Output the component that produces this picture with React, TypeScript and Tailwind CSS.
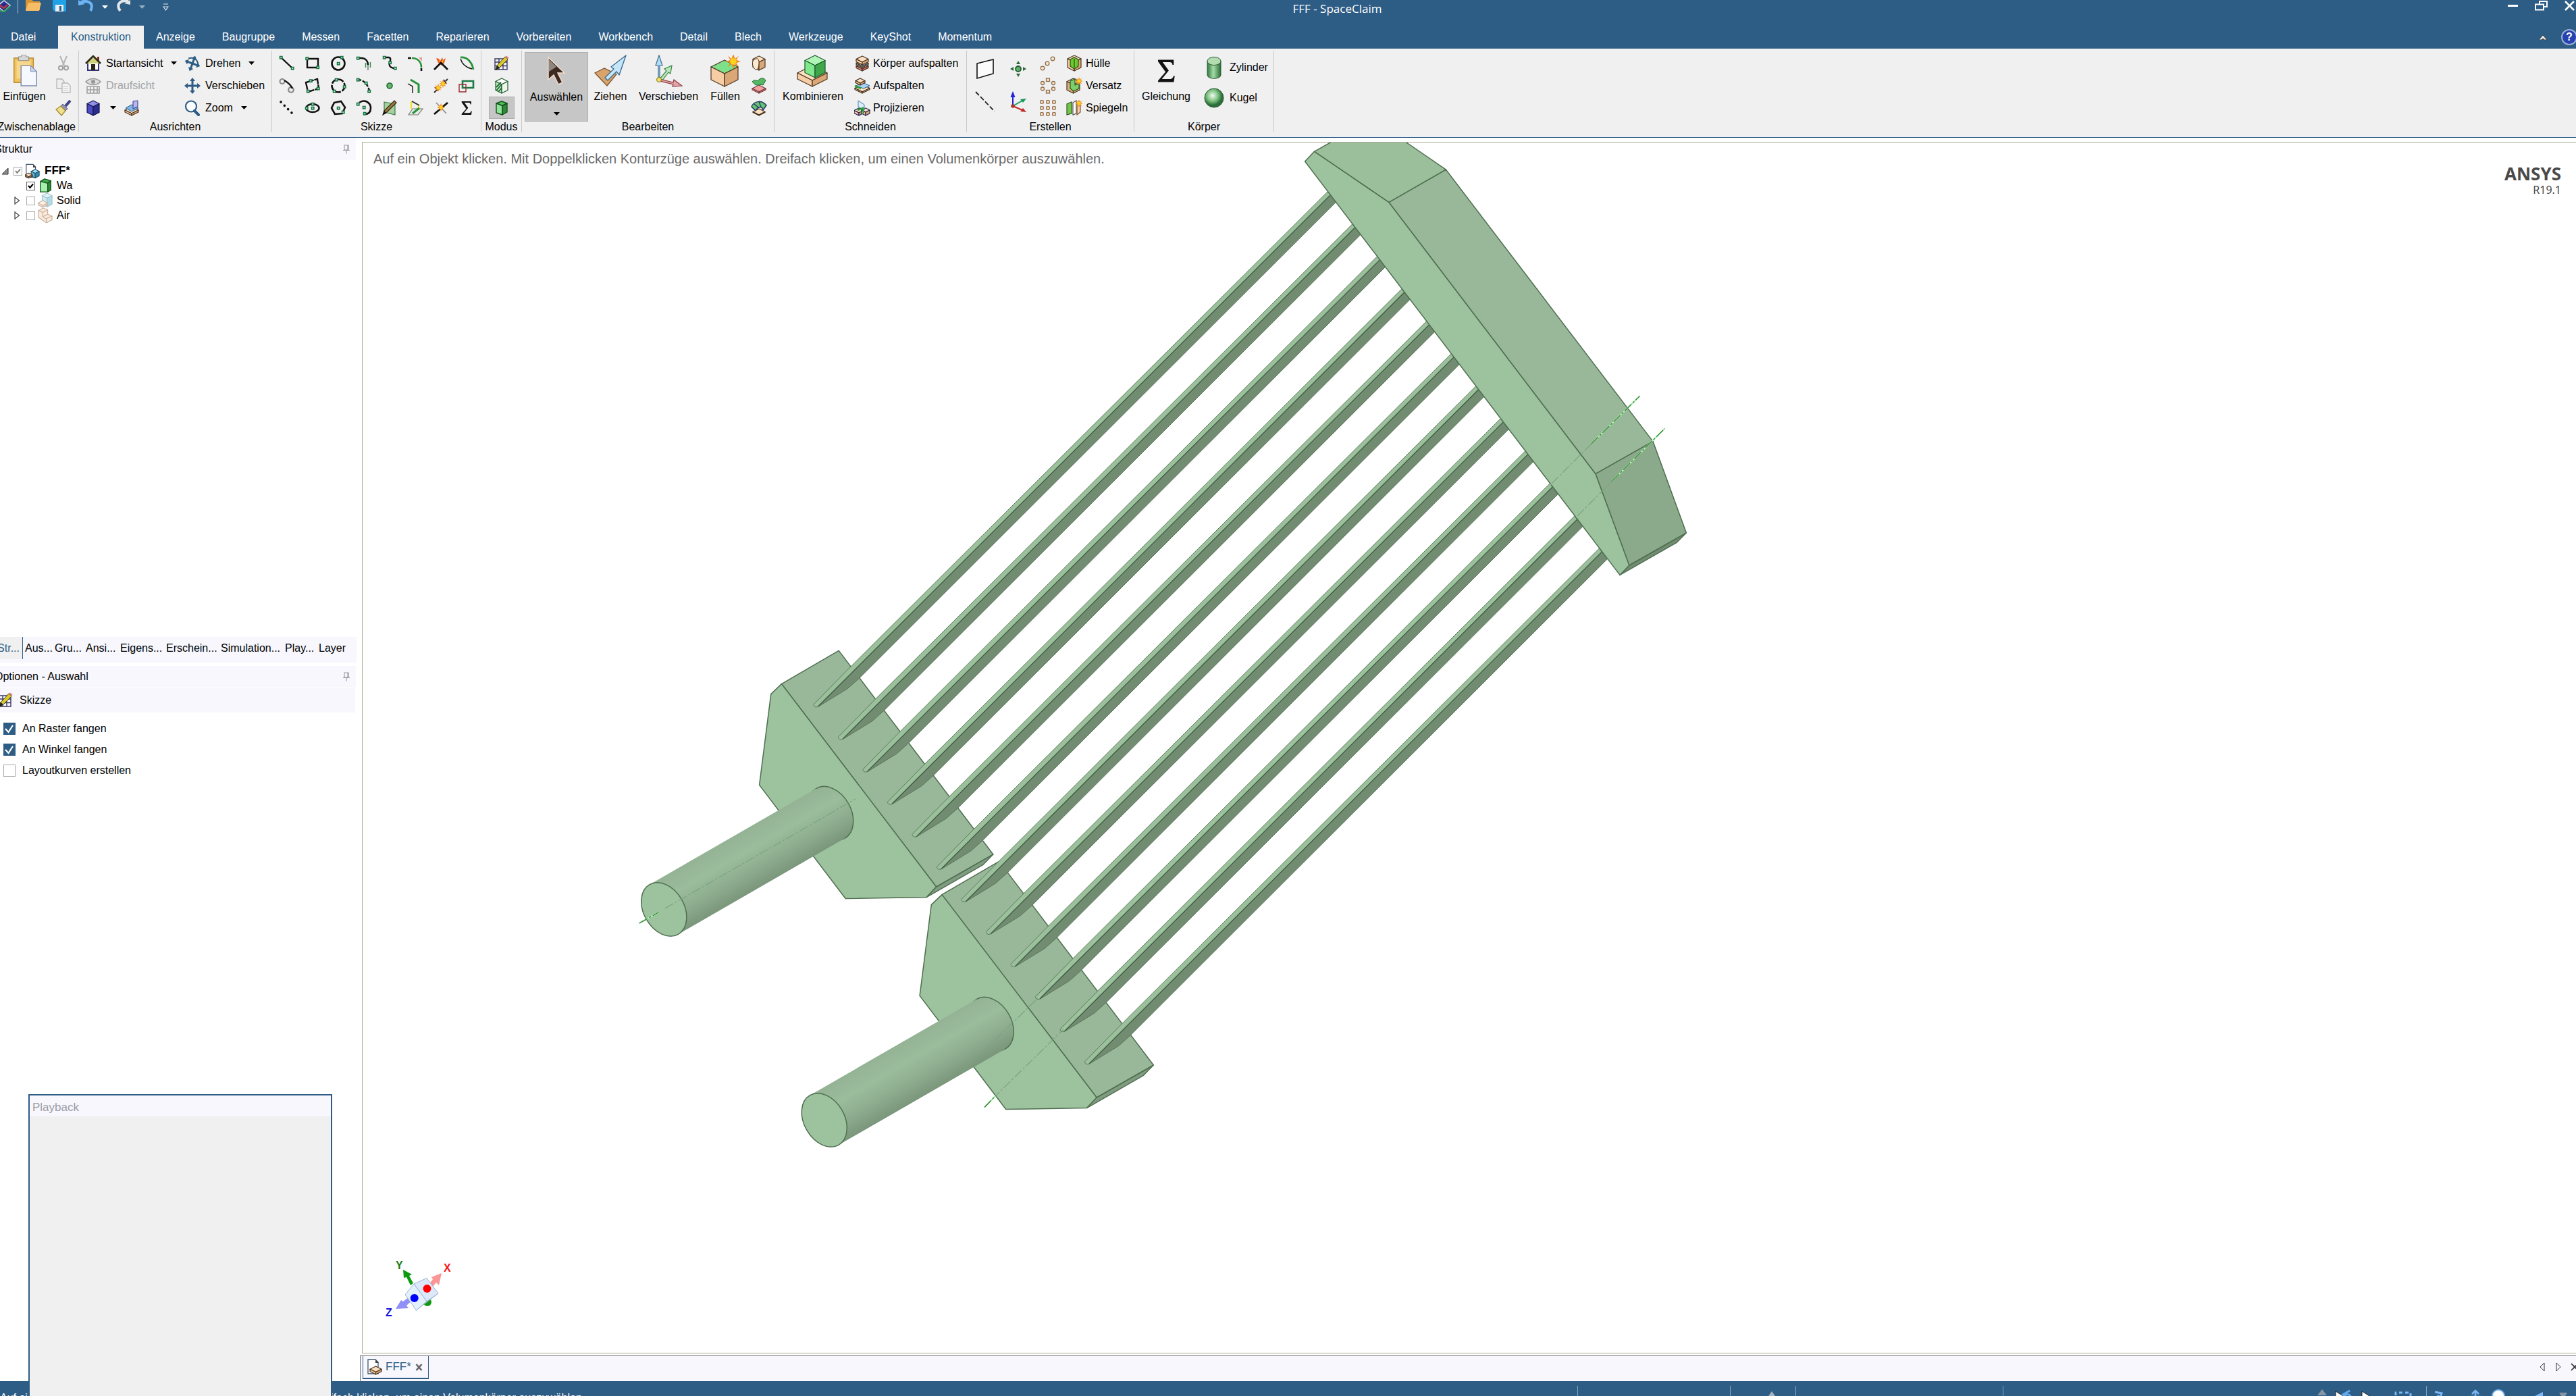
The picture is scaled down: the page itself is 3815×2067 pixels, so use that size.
import type { ReactNode } from "react";

type Kids = { children?: ReactNode };

function Ico({ w = 24, h = 24, vw = 24, vh = 24, children }: Kids & { w?: number; h?: number; vw?: number; vh?: number }) {
  return (
    <svg width={w} height={h} viewBox={`0 0 ${vw} ${vh}`} fill="none" aria-hidden="true" className="block shrink-0">
      {children}
    </svg>
  );
}

/* small green handle used by the sketch tools */
const Sq = ({ x, y }: { x: number; y: number }) => (
  <rect x={x - 1.5} y={y - 1.5} width="3.4" height="3.4" fill="#b9e3c8" stroke="#14713f" strokeWidth="1.5" />
);

const Star = ({ x, y, r = 6 }: { x: number; y: number; r?: number }) => (
  <g transform={`translate(${x} ${y}) scale(${r / 6})`}>
    <path d="M0-6 1.4-2.2 4.5-4.5 2.4-1.2 6 0 2.4 1.2 4.5 4.5 1.4 2.2 0 6-1.4 2.2-4.5 4.5-2.4 1.2-6 0-2.4-1.2-4.5-4.5-1.4-2.2Z" fill="#f08a1a" />
    <circle r="2.6" fill="#ffd21e" />
  </g>
);

/* an isometric box with three shaded faces */
function Box({ x = 3, y = 2, w = 18, h = 20, top = "#fde0c2", left = "#f6cda4", right = "#dba777", line = "#4a3420" }: {
  x?: number; y?: number; w?: number; h?: number; top?: string; left?: string; right?: string; line?: string;
}) {
  const d = w * 0.25;
  const m = x + w / 2;
  return (
    <g stroke={line} strokeWidth="1.2" strokeLinejoin="round">
      <path d={`M${x} ${y + d}L${m} ${y}L${x + w} ${y + d}L${m} ${y + 2 * d}Z`} fill={top} />
      <path d={`M${x} ${y + d}L${m} ${y + 2 * d}V${y + h}L${x} ${y + h - d}Z`} fill={left} />
      <path d={`M${x + w} ${y + d}L${m} ${y + 2 * d}V${y + h}L${x + w} ${y + h - d}Z`} fill={right} />
    </g>
  );
}

const GreenSolid = () => (
  <Ico>
    <g stroke="#14501c" strokeWidth="1.4" strokeLinejoin="round">
      <path d="M4 5 12 2l8 3-7 3.5Z" fill="#4fbf5a" />
      <path d="M4 5l9 3.5V22l-9-3Z" fill="#8fe39a" />
      <path d="M20 5l-7 3.5V22l7-4Z" fill="#2c8a38" />
    </g>
  </Ico>
);

const SketchPencil = () => (
  <Ico>
    <path d="M2 5h18v16H2ZM2 10h18M2 15.500h18M8 5v16M14 5v16" stroke="#3d3a66" strokeWidth="1.4" />
    <path d="M3 22l2-7L17 2l4 4L9 18Z" fill="#d9c92e" stroke="#44401a" strokeWidth="1" />
    <path d="M17 2l2-1.500 3.500 3L21 6Z" fill="#d98080" />
    <path d="M3 22l2-7 4 3Z" fill="#222" />
  </Ico>
);

const Sigma = ({ w = 24, h = 24 }: { w?: number; h?: number }) => (
  <Ico w={w} h={h}>
    <path d="M4 1h15.500v5h-1.200c-.4-2-1.200-2.600-3.300-2.600H8.600l6 8.200-6.800 8.400h7.700c2.300 0 3.100-.8 3.800-3h1.200l-.9 6H4v-1.400L11.400 13 4 2.600Z" fill="#111" />
  </Ico>
);

const Pin = () => (
  <Ico w={12} h={14} vw={12} vh={14}>
    <path d="M3 1h6v7H3ZM1 8.500h10M6 9v4.500M8 1v7" stroke="#9a9aa2" strokeWidth="1.100" />
  </Ico>
);

const DownTri = ({ light = false }: { light?: boolean }) => (
  <Ico w={9} h={5} vw={9} vh={5}>
    <path d="M0 0h9L4.500 5Z" fill={light ? "#fff" : "#000"} />
  </Ico>
);

/* the three-by-eight palette of sketch tools, in reading order */
const sketchTools: { label: string; art: ReactNode }[] = [
  { label: "Linie", art: <><path d="M3 3 20 19" stroke="#111" strokeWidth="2.400" /><Sq x={3} y={3} /><Sq x={20} y={19} /></> },
  { label: "Rechteck", art: <><path d="M4 5h16v13H4Z" stroke="#111" strokeWidth="2.400" /><Sq x={3.5} y={4.5} /><Sq x={19.5} y={17.500} /></> },
  { label: "Kreis", art: <><circle cx="12" cy="12" r="9.500" stroke="#111" strokeWidth="2.600" /><Sq x={12} y={12} /><Sq x={17} y={3} /></> },
  { label: "Tangentialbogen", art: <><path d="M3 4h5c6 0 10 4 10 10" stroke="#111" strokeWidth="2.400" /><path d="M18 14v8" stroke="#999" strokeWidth="2.400" /><path d="M14.500 11v7M21.500 10v8" stroke="#2b9350" strokeWidth="1.400" /><Sq x={3} y={4} /></> },
  { label: "Spline", art: <><path d="M4 3h6c5 0 3 5 2 8s0 8 8 8" stroke="#111" strokeWidth="2.400" /><Sq x={4} y={3} /><Sq x={12.500} y={10.500} /><Sq x={20} y={19} /></> },
  { label: "Abrunden", art: <><path d="M1 4h5M21 19v4" stroke="#111" strokeWidth="2.600" /><path d="M17 3h5v6Z" fill="#e59c9c" /><path d="M7 4c8 0 14 5 14 14" stroke="#279238" strokeWidth="2.600" /></> },
  { label: "Trimmen", art: <><path d="M5 4l4 1 2 3 3-5 1 4 4-3-2 7-4 4-5-4Z" fill="#ee5a1c" /><path d="M9 6l3 4 4-4-2 6h-3Z" fill="#ffd21e" /><path d="M2 21 12 11l10 10" stroke="#111" strokeWidth="2.800" /></> },
  { label: "Biegen", art: <><path d="M3 5c2 7 8 13 17 15" stroke="#111" strokeWidth="1.400" /><path d="M3 3c10-1 17 7 19 18" stroke="#279238" strokeWidth="2.800" /></> },
  { label: "Tangentiallinie", art: <><circle cx="5" cy="5.500" r="3.500" stroke="#888" strokeWidth="2" /><circle cx="18" cy="18" r="3.800" stroke="#888" strokeWidth="2.200" /><path d="M8 4c5 3 10 7 12 12" stroke="#111" strokeWidth="2.400" /></> },
  { label: "Drei-Punkt-Rechteck", art: <><path d="M2 7 19 2l2 14L5 21Z" stroke="#111" strokeWidth="2.400" strokeDasharray="12 1" /><Sq x={9} y={4.500} /><Sq x={5} y={20} /><Sq x={20} y={16} /></> },
  { label: "Drei-Punkt-Kreis", art: <><circle cx="12" cy="12" r="9.500" stroke="#111" strokeWidth="2.600" strokeDasharray="9 2" /><Sq x={9} y={3} /><Sq x={21} y={13.500} /><Sq x={6} y={20} /></> },
  { label: "Drei-Punkt-Bogen", art: <><path d="M3 3c8 0 15 6 17 17" stroke="#111" strokeWidth="2.400" strokeDasharray="5 2" /><Sq x={3} y={3} /><Sq x={15} y={8} /><Sq x={19.500} y={20} /></> },
  { label: "Punkt", art: <circle cx="12" cy="12" r="4" fill="#67b567" stroke="#1d6b35" strokeWidth="1.600" /> },
  { label: "Offset-Kurve", art: <><path d="M1 9l7 4v10" stroke="#111" strokeWidth="1.400" /><path d="M5 3l12 7v13" stroke="#279238" strokeWidth="3" /></> },
  { label: "Teilen", art: <><path d="M2 22l5-5M18 6l4-4M3 14l5 5M16 3l4 6" stroke="#333" strokeWidth="2" /><Star x={8} y={15} r={6} /><Star x={15} y={9} r={6} /></> },
  { label: "Skalieren", art: <><path d="M6 5h16v10H6Z" stroke="#1c7a46" strokeWidth="2.600" /><path d="M1 10h10v11H1Z" stroke="#9c2d2d" strokeWidth="1.400" /></> },
  { label: "Konstruktionslinie", art: <path d="M3 3 20 20" stroke="#111" strokeWidth="3.600" strokeDasharray="0.100 7.400" strokeLinecap="round" /> },
  { label: "Ellipse", art: <><ellipse cx="12" cy="12" rx="9.500" ry="6" stroke="#111" strokeWidth="2.600" /><Sq x={12} y={12} /><Sq x={3} y={12} /><Sq x={12} y={6} /></> },
  { label: "Polygon", art: <><path d="M6 4l10-2 6 9-4 9-11 1-5-9Z" stroke="#111" strokeWidth="2.600" /><Sq x={12} y={12} /><Sq x={19} y={18} /></> },
  { label: "Bogen", art: <><path d="M5 4c8-6 17 0 17 8s-6 9-9 9" stroke="#111" strokeWidth="2.600" /><Sq x={3} y={6} /><Sq x={12} y={11} /><Sq x={13} y={20} /></> },
  { label: "Flächenkurve", art: <><path d="M4 3l16 3v16L4 18Z" fill="#a9cfa0" stroke="#3c7a48" strokeWidth="1.200" /><path d="M2 22l2-6L19 1l3 3L7 19Z" fill="#9a7a3a" stroke="#2d2a18" strokeWidth="1.200" /><path d="M2 22l2-6 3 3Z" fill="#111" /></> },
  { label: "Auf Skizze projizieren", art: <><path d="M2 22l6-9h15l-7 9Z" fill="#e5ece5" stroke="#777" strokeWidth="1.200" /><path d="M6 2v11M17 7v8" stroke="#f0e22c" strokeWidth="2.400" /><path d="M7 2l11 6" stroke="#222" strokeWidth="1.600" /><path d="M8 20l10-8" stroke="#279238" strokeWidth="3" /></> },
  { label: "Kurven teilen", art: <><path d="M2 21 22 4" stroke="#111" strokeWidth="2.800" /><path d="M5 4l15 16" stroke="#888" strokeWidth="1.600" /><Star x={12} y={11} r={6} /></> },
];

const Tan = (p: { y?: number; h?: number }) => <Box x={3} y={p.y ?? 1} w={18} h={p.h ?? 21} />;

function Group({ name, width, children }: Kids & { name: string; width: string }) {
  return (
    <section aria-label={name} className={`flex h-[120px] shrink-0 flex-col border-r border-[#c9c9c9] pt-0.5 ${width}`}>
      <div className="flex h-[99px] shrink-0">{children}</div>
      <div className="flex h-6 shrink-0 justify-center leading-6">{name}</div>
    </section>
  );
}

function Small({ icon, label, caret, muted, slot = "w-[38px]" }: { icon: ReactNode; label: string; caret?: boolean; muted?: boolean; slot?: string }) {
  return (
    <button type="button" className={`flex h-[33px] items-center whitespace-nowrap ${muted ? "text-[#a3a3a3]" : ""}`}>
      <span className={`flex justify-center ${slot}`}>{icon}</span>
      {label}
      {caret && <span className="ml-3"><DownTri /></span>}
    </button>
  );
}

function Large({ icon, label, width, active }: { icon: ReactNode; label: string; width: string; active?: boolean }) {
  return (
    <button
      type="button"
      className={`flex shrink-0 flex-col items-center pt-1 ${width} ${active ? "h-[103px] border border-[#adadad] bg-[#c6c6c6]" : "h-[99px]"}`}
    >
      {icon}
      <span className="mt-0.5 leading-6">{label}</span>
      {active && <span className="mt-2.5"><DownTri /></span>}
    </button>
  );
}

function IconButton({ label, children, size = "h-[33px] w-[38px]", active }: Kids & { label: string; size?: string; active?: boolean }) {
  return (
    <button type="button" aria-label={label} className={`flex items-center justify-center ${size} ${active ? "border border-[#adadad] bg-[#c6c6c6]" : ""}`}>
      {children}
    </button>
  );
}

const PanArrows = ({ turn = false }: { turn?: boolean }) => (
  <Ico>
    <g fill="#2d5c85" transform={turn ? "rotate(20 12 12)" : undefined}>
      <path d="M12 0l4 5h-2.500v5.500H19V8l5 4-5 4v-2.500h-5.500V19H16l-4 5-4-5h2.500v-5.500H5V16l-5-4 5-4v2.500h5.500V5H8Z" />
      {turn && <path d="M4 7c6-5 13-3 16 3" stroke="#2d5c85" strokeWidth="2" fill="none" />}
    </g>
  </Ico>
);

function Ribbon() {
  return (
    <div className="flex h-[129px] shrink-0 overflow-hidden bg-[#f0f0f0] pt-[3px] text-black">
      <section aria-label="Zwischenablage" className="flex h-[120px] w-[117px] shrink-0 flex-col border-r border-[#c9c9c9] pt-0.5">
        <div className="flex h-[99px] shrink-0">
          <Large
            width="w-[72px]"
            label="Einfügen"
            icon={
              <Ico w={42} h={48} vw={44} vh={50}>
                <path d="M6 5h30v38H6Z" fill="#f0c25c" stroke="#b98c2e" strokeWidth="1.500" />
                <path d="M10 9h22v28H10Z" fill="#f6d78c" />
                <path d="M13 3h4l1-3h6l1 3h4v6H13Z" fill="#d7d7d7" stroke="#858585" />
                <path d="M17 17h15l9 9v22H17Z" fill="#f5f8fe" stroke="#7d8bab" strokeWidth="1.500" />
                <path d="M32 17v9h9Z" fill="#c7d3ea" stroke="#7d8bab" />
              </Ico>
            }
          />
          <div className="flex flex-col">
            <IconButton label="Ausschneiden" size="h-[33px] w-11">
              <Ico><path d="M7 1l6 14M17 1l-6 14" stroke="#b4b4b4" strokeWidth="2" /><circle cx="8" cy="18.500" r="3" stroke="#a0a0a0" strokeWidth="2" /><circle cx="16" cy="18.500" r="3" stroke="#a0a0a0" strokeWidth="2" /></Ico>
            </IconButton>
            <IconButton label="Kopieren" size="h-[33px] w-11">
              <Ico><path d="M2 2h8l3 4v10H2Z" fill="#eee" stroke="#b5b5b5" strokeWidth="1.300" /><path d="M10 8h8l4 4v10H10Z" fill="#f4f4f4" stroke="#b5b5b5" strokeWidth="1.300" /><path d="M12 13h7M12 16h7M12 19h7" stroke="#c4c4c4" /></Ico>
            </IconButton>
            <IconButton label="Format übertragen" size="h-[33px] w-11">
              <Ico><path d="M22 1l-7 8" stroke="#3b4186" strokeWidth="4" /><path d="M11 6l7 7-3 3-7-7Z" fill="#9494b4" stroke="#55557c" /><path d="M8 9l7 7-6 7L1 14Z" fill="#efe08a" stroke="#a08a34" strokeWidth="1.200" /></Ico>
            </IconButton>
          </div>
        </div>
        <div className="flex h-6 shrink-0 justify-end pr-1 leading-6">Zwischenablage</div>
      </section>

      <Group name="Ausrichten" width="w-[286px]">
        <div className="flex w-[149px] flex-col items-start pl-0.5">
          <Small label="Startansicht" caret icon={
            <Ico><path d="M18 2h3v8h-3Z" fill="#8c2a1f" /><path d="M4 10h16v12H4Z" fill="#fff" stroke="#33337a" strokeWidth="2" /><path d="M1 12 12 1l11 11" stroke="#2e2a1c" strokeWidth="2.600" fill="#cdd07a" /><path d="M9 13h6v9H9Z" fill="#2a2418" /></Ico>
          } />
          <Small label="Draufsicht" muted icon={
            <Ico><path d="M1 6c6-6 16-6 22 0-6 6-16 6-22 0Z" fill="#ddd" stroke="#9a9a9a" strokeWidth="1.600" /><circle cx="12" cy="6" r="3" fill="#999" /><path d="M3 13h18v10H3ZM3 18h18M8 13v10M13 13v10M18 13v10" stroke="#a2a2a2" strokeWidth="1.600" /></Ico>
          } />
          <div className="flex h-[33px] items-center">
            <button type="button" aria-label="Ausrichtung" className="flex items-center">
              <span className="flex w-[38px] justify-center"><Ico><Box top="#8f8fe6" left="#4b4bc4" right="#2c2c8e" line="#15154e" x={3} y={1} h={22} /></Ico></span>
              <span className="ml-1.5"><DownTri /></span>
            </button>
            <span className="ml-3"><IconButton label="Ansicht ausrichten" size="h-[33px] w-6">
              <Ico><Box x={1} y={10} w={20} h={13} /><path d="M2 12l9-5 10 5-10 5Z" fill="#7fb6e6" stroke="#265b8a" /><path d="M13 2l7-1v9l-7 3Z" fill="#b7b7ee" stroke="#33338a" /></Ico>
            </IconButton></span>
          </div>
        </div>
        <div className="flex flex-col items-start">
          <Small label="Drehen" caret icon={<PanArrows turn />} />
          <Small label="Verschieben" icon={<PanArrows />} />
          <Small label="Zoom" caret icon={<Ico><circle cx="10" cy="9.500" r="8" fill="#fafdff" stroke="#2d5c85" strokeWidth="2.200" /><path d="M15 16l6 6" stroke="#2d5c85" strokeWidth="4" strokeLinecap="round" /></Ico>} />
        </div>
      </Group>

      <Group name="Skizze" width="w-[310px]">
        <div className="grid grid-cols-8 content-start pl-[3px]">
          {sketchTools.map((t) => (
            <IconButton key={t.label} label={t.label}><Ico>{t.art}</Ico></IconButton>
          ))}
          <IconButton label="Gleichung skizzieren"><Sigma w={22} h={22} /></IconButton>
        </div>
      </Group>

      <Group name="Modus" width="w-[60px]">
        <div className="flex w-full flex-col items-center">
          <IconButton label="Skizzenmodus"><SketchPencil /></IconButton>
          <IconButton label="Schnittmodus">
            <Ico><Box x={3} y={1} w={18} h={22} top="#fff" left="#bfe8c2" right="#eef7ee" line="#1c5a28" /><path d="M4 14l7-7M4 19l8-9M7 21l5-6" stroke="#1c6a2c" strokeWidth="1.800" /></Ico>
          </IconButton>
          <IconButton label="3D-Modus" active><GreenSolid /></IconButton>
        </div>
      </Group>

      <Group name="Bearbeiten" width="w-[374px]">
        <div className="flex w-full pl-1">
          <Large active width="w-[94px]" label="Auswählen" icon={
            <Ico w={42} h={48} vw={42} vh={48}>
              <path d="M9 3v33l8-7 7 14 6-3-7-14h10Z" fill="#3c2a22" stroke="#f6dcc8" strokeWidth="1.500" />
              <path d="M10 6v18l11-7Z" fill="#8d8783" />
            </Ico>
          } />
          <Large width="w-[66px]" label="Ziehen" icon={
            <Ico w={50} h={48} vw={50} vh={48}>
              <path d="M2 27l14-7 18 9-14 17Z" fill="#d9a36c" stroke="#7a5430" strokeWidth="1.300" />
              <path d="M48 1 26 18l4 3-13 13 4 4 13-13 4 5Z" fill="#c4e6f8" stroke="#3c6d92" strokeWidth="1.400" strokeLinejoin="round" />
            </Ico>
          } />
          <Large width="w-[106px]" label="Verschieben" icon={
            <Ico w={46} h={48} vw={46} vh={48}>
              <path d="M8 37V16H4L9 1l5 15h-4v21Z" fill="#b5dcf2" stroke="#3c6d92" strokeWidth="1.200" />
              <path d="M10 36l10-12-3-3 11-5-2 12-3-2-9 12Z" fill="#bde6be" stroke="#3a8a46" strokeWidth="1.200" />
              <path d="M10 36l20 5 1-4 12 9-14 1 1-3-20-5Z" fill="#e2a3a6" stroke="#8e3c42" strokeWidth="1.200" />
              <circle cx="9" cy="37" r="3.500" fill="#f1e36a" stroke="#7c6f1e" />
            </Ico>
          } />
          <Large width="w-[62px]" label="Füllen" icon={
            <Ico w={46} h={48} vw={46} vh={48}>
              <Box x={2} y={8} w={40} h={39} top="#7fe08a" />
              <Star x={35} y={10} r={11} />
            </Ico>
          } />
          <div className="flex flex-col">
            <IconButton label="Verschmelzen"><Ico><Tan /><path d="M3 8c5-5 9-4 9 2s-1 11-4 11-7-6-5-13Z" fill="#fde8d0" stroke="#4a3420" /></Ico></IconButton>
            <IconButton label="Fläche ersetzen"><Ico><Box x={2} y={11} w={20} h={12} top="#f2a2a2" left="#e79a9a" right="#c87676" line="#7a3c3c" /><path d="M2 6c4-5 6 1 10-3s8-2 10 1l-4 7c-4-2-7 2-12-1Z" fill="#56b765" stroke="#206a30" /></Ico></IconButton>
            <IconButton label="Anpassen"><Ico><Box x={3} y={13} w={18} h={10} /><path d="M1 10C4 2 16-1 23 8l-5 7c-1-4-3-5-6-4s-4 3-5 5Z" fill="#66c178" stroke="#22335a" strokeWidth="1.400" /><path d="M5 6l6 5M12 2l3 9" stroke="#22335a" strokeWidth="1.200" /></Ico></IconButton>
          </div>
        </div>
      </Group>

      <Group name="Schneiden" width="w-[285px]">
        <Large width="w-[114px]" label="Kombinieren" icon={
          <Ico w={50} h={48} vw={50} vh={48}>
            <Box x={2} y={16} w={44} h={31} />
            <Box x={13} y={1} w={30} h={33} top="#b0f5b8" left="#7fe88c" right="#3fa64c" line="#1c5a28" />
          </Ico>
        } />
        <div className="flex flex-col items-start">
          <Small slot="w-8" label="Körper aufspalten" icon={<Ico><Box y={11} h={12} top="#f4b0b0" left="#e88f8f" right="#c76464" /><Box y={7} h={11} top="#bfe0f8" left="#8fc3ec" right="#5a97c8" /><Box y={1} h={13} /></Ico>} />
          <Small slot="w-8" label="Aufspalten" icon={<Ico><Box x={1} y={10} w={22} h={13} /><path d="M3 12l9-5 11 5-9 4Z" fill="#a9d4f4" stroke="#235b8f" /><Box x={2} y={1} w={14} h={10} /><path d="M1 12l9 4" stroke="#27a03a" strokeWidth="2.600" /></Ico>} />
          <Small slot="w-8" label="Projizieren" icon={<Ico><Box x={0} y={12} w={14} h={11} line="#2b2350" /><Box x={11} y={12} w={12} h={11} line="#2b2350" /><path d="M6 1l9 6v8l-9-5Z" fill="#dceefb" stroke="#4b7fa8" /><path d="M5 15l8-3 1 8" stroke="#27a03a" strokeWidth="2.600" /></Ico>} />
        </div>
      </Group>

      <Group name="Erstellen" width="w-[248px]">
        <div className="flex w-[54px] flex-col">
          <IconButton label="Ebene" size="h-[49px] w-[54px]"><Ico w={28} h={32} vw={28} vh={32}><path d="M2 8 26 2v21L2 30Z" fill="#fbfbfb" stroke="#111" strokeWidth="1.600" /></Ico></IconButton>
          <IconButton label="Achse" size="h-[49px] w-[54px]"><Ico w={30} h={32} vw={30} vh={32}><path d="M1 1l28 29" stroke="#222" strokeWidth="1.800" strokeDasharray="7 3" /></Ico></IconButton>
        </div>
        <div className="flex w-11 flex-col">
          <IconButton label="Punkt erstellen" size="h-[49px] w-11">
            <Ico><circle cx="12" cy="12" r="4" fill="#5fae6a" stroke="#245d33" strokeWidth="1.800" /><path d="M12 0l3 5H9ZM12 24l3-5H9ZM0 12l5-3v6ZM24 12l-5-3v6Z" fill="#2b6b3b" /></Ico>
          </IconButton>
          <IconButton label="Ursprung" size="h-[49px] w-11">
            <Ico w={26} h={32} vw={26} vh={32}>
              <path d="M5 22V8" stroke="#2222d0" strokeWidth="2" /><path d="M5 0l3.500 9h-7Z" fill="#2222e0" />
              <path d="M5 22l14-8" stroke="#169a5c" strokeWidth="2" /><path d="M25 11l-9 1 4 5Z" fill="#169a5c" />
              <path d="M5 22l14 6" stroke="#c02b2b" strokeWidth="2" /><path d="M25 31l-9-1 4-5Z" fill="#c02b2b" />
              <circle cx="5" cy="22" r="2.800" fill="#a33a22" />
            </Ico>
          </IconButton>
        </div>
        <div className="flex w-11 flex-col">
          <IconButton label="Lineares Muster" size="h-[33px] w-11"><Ico><g fill="#fbe2c8" stroke="#8f6f4f" strokeWidth="1.300"><circle cx="4" cy="19" r="2.800" /><circle cx="11" cy="12" r="2.800" /><circle cx="19" cy="5" r="2.800" /></g></Ico></IconButton>
          <IconButton label="Kreismuster" size="h-[33px] w-11"><Ico><g fill="#fbe2c8" stroke="#8f6f4f" strokeWidth="1.300"><rect x="9.500" y="1" width="5" height="4.500" /><rect x="9.500" y="18.500" width="5" height="4.500" /><circle cx="4" cy="8" r="2.500" /><circle cx="20" cy="8" r="2.500" /><circle cx="4" cy="16.500" r="2.500" /><circle cx="20" cy="16.500" r="2.500" /></g></Ico></IconButton>
          <IconButton label="Füllmuster" size="h-[33px] w-11"><Ico><g fill="#fbe2c8" stroke="#8f6f4f" strokeWidth="1.300">{[1, 10, 19].map((y) => [1, 10, 19].map((x) => <rect key={`${x}-${y}`} x={x - 0.3} y={y - 0.3} width="4.500" height="4.500" rx="1" />))}</g></Ico></IconButton>
        </div>
        <div className="flex flex-col items-start">
          <Small slot="w-[34px]" label="Hülle" icon={<Ico><Box x={2} y={0} w={20} h={23} /><path d="M6 6l6-3 6 3v10l-6 4-6-4Z" fill="#6fc832" stroke="#274d12" strokeWidth="1.200" /><path d="M12 5v13" stroke="#274d12" strokeWidth="1.200" /></Ico>} />
          <Small slot="w-[34px]" label="Versatz" icon={<Ico><Box x={1} y={1} w={19} h={22} left="#d9b07a" /><path d="M6 5l7-3v9l6-2v7l-8 4-5-4Z" fill="#7ccf6a" stroke="#2c5a20" strokeWidth="1.200" /><Star x={19} y={5} r={6} /></Ico>} />
          <Small slot="w-[34px]" label="Spiegeln" icon={<Ico><path d="M1 6l7-3v17l-7 2Z" fill="#74c745" stroke="#2c5a20" strokeWidth="1.200" /><path d="M10 4l5-3v19l-5 2Z" fill="#fff" stroke="#555" strokeWidth="1.200" /><path d="M16 7l5-2v13l-5 4Z" fill="#f6cda4" stroke="#7a5430" strokeWidth="1.200" /><Star x={19} y={5} r={6} /></Ico>} />
        </div>
      </Group>

      <Group name="Körper" width="w-[207px]">
        <Large width="w-[94px]" label="Gleichung" icon={<span className="py-1.5"><Sigma w={38} h={36} /></span>} />
        <div className="flex flex-col items-start">
          <button type="button" className="flex h-[46px] items-center">
            <span className="flex w-[47px] justify-center">
              <Ico w={24} h={34} vw={24} vh={34}>
                <defs><linearGradient id="cyl"><stop offset="0" stopColor="#2f7a3c" /><stop offset=".45" stopColor="#a6dca8" /><stop offset="1" stopColor="#2a6b36" /></linearGradient></defs>
                <path d="M2 7v21c0 7 20 7 20 0V7Z" fill="url(#cyl)" stroke="#2c5a34" />
                <ellipse cx="12" cy="7.500" rx="10" ry="6" fill="#b3dcb0" stroke="#2c5a34" />
              </Ico>
            </span>
            Zylinder
          </button>
          <button type="button" className="flex h-11 items-center">
            <span className="flex w-[47px] justify-center">
              <Ico w={30} h={30} vw={30} vh={30}>
                <defs><radialGradient id="ball" cx=".42" cy=".38"><stop offset="0" stopColor="#f0fbf0" /><stop offset=".6" stopColor="#7cc07f" /><stop offset="1" stopColor="#2b6f38" /></radialGradient></defs>
                <circle cx="15" cy="15" r="14" fill="url(#ball)" stroke="#2c5a34" />
              </Ico>
            </span>
            Kugel
          </button>
        </div>
      </Group>
    </div>
  );
}

const menu = ["Anzeige", "Baugruppe", "Messen", "Facetten", "Reparieren", "Vorbereiten", "Workbench", "Detail", "Blech", "Werkzeuge", "KeyShot", "Momentum"];

function Header() {
  return (
    <header className="shrink-0 bg-[#2d5c85] text-white">
      <div className="grid h-[38px] grid-cols-3 overflow-hidden">
        <div className="flex h-5 items-center">
          <Ico w={16} h={20} vw={16} vh={20}>
            <path d="M-4 9 6 1l9 7-9 9Z" fill="#2b2c86" stroke="#d8dcf4" strokeWidth="1.500" />
            <path d="M0 8l6 4 5-5" stroke="#d23b3b" strokeWidth="2" />
            <path d="M0 16l6 1 9-8" stroke="#2fae55" strokeWidth="2" />
          </Ico>
          <span className="ml-2.5 h-5 w-px bg-[#a9bfd2]" />
          <button type="button" aria-label="Öffnen" className="ml-2.5"><Ico w={24} h={20} vw={24} vh={20}><path d="M1 0h9l3 2h9v13H1Z" fill="#d99433" /><path d="M5 4h19l-3 12H1Z" fill="#f6bd68" /></Ico></button>
          <button type="button" aria-label="Speichern" className="ml-4"><Ico w={22} h={20} vw={22} vh={20}><path d="M1 0h20v17H4l-3-3Z" fill="#1fa2e6" /><path d="M5 7h12v10H5Z" fill="#e8eef4" /><path d="M11 9h3v7h-3Z" fill="#2d5c85" /></Ico></button>
          <button type="button" aria-label="Rückgängig" className="ml-4"><Ico w={26} h={20} vw={26} vh={20}><path d="M5 3c10-3 20 1 14 13" stroke="#6db5f5" strokeWidth="4" /><path d="M1 0v8l10-2Z" fill="#6db5f5" /></Ico></button>
          <button type="button" aria-label="Rückgängig-Verlauf" className="ml-2.5"><DownTri light /></button>
          <button type="button" aria-label="Wiederholen" className="ml-2.5"><Ico w={26} h={20} vw={26} vh={20}><path d="M20 2C9-1 1 6 8 16" stroke="#e3e7ea" strokeWidth="4" /><path d="M23 0v7l-9-2Z" fill="#e3e7ea" /></Ico></button>
          <button type="button" aria-label="Wiederholen-Verlauf" className="ml-2.5 opacity-50"><DownTri light /></button>
          <button type="button" aria-label="Symbolleiste anpassen" className="ml-[26px]"><Ico w={9} h={11} vw={9} vh={11}><path d="M1 1h7M1 5h7L4.500 10Z" stroke="#dce6ef" strokeWidth="1.200" /></Ico></button>
        </div>
        <h1 className="ml-[146px] text-center font-['Open_Sans','Noto_Sans',sans-serif] text-[17px] leading-[26px]">FFF - SpaceClaim</h1>
        <div className="flex h-4 items-center justify-end">
          <button type="button" aria-label="Minimieren"><Ico w={16} h={16} vw={16} vh={16}><path d="M0 8.500h15" stroke="#fff" strokeWidth="3" /></Ico></button>
          <button type="button" aria-label="Wiederherstellen" className="ml-6"><Ico w={20} h={16} vw={20} vh={16}><path d="M1 6.500h12v8H1ZM7 6V2h11v8h-4" stroke="#fff" strokeWidth="2" /></Ico></button>
          <button type="button" aria-label="Schließen" className="ml-6"><Ico w={17} h={16} vw={17} vh={16}><path d="M1 2l13 13M14 2 1 15" stroke="#fff" strokeWidth="2.600" /></Ico></button>
        </div>
      </div>
      <nav className="flex h-[34px] items-center">
        <button type="button" className="h-full w-[86px] pl-4 text-left">Datei</button>
        <button type="button" className="h-full w-[127px] bg-[#f0f0f0] text-[#2d5c85]">Konstruktion</button>
        <div className="-ml-0.5 flex h-full">
          {menu.map((m) => <button key={m} type="button" className="h-full px-5">{m}</button>)}
        </div>
        <span className="flex-1" />
        <button type="button" aria-label="Menüband minimieren" className="mr-5"><Ico w={14} h={10} vw={14} vh={10}><path d="M1 9 7 2l6 7H9L7 7 5 9Z" fill="#eee" stroke="#444" /></Ico></button>
        <button type="button" aria-label="Hilfe" className="-mr-0.5 flex h-6 w-6 items-center justify-center rounded-full border-2 border-[#9bb0d8] bg-[#2643b0] text-base font-bold leading-5">?</button>
      </nav>
    </header>
  );
}

function PanelTitle({ children, height }: Kids & { height: string }) {
  return (
    <div className={`mr-px flex shrink-0 items-center overflow-hidden bg-[#f7f7fd] pr-2 ${height}`}>
      <h2 className="-ml-2 flex-1">{children}</h2>
      <button type="button" aria-label="Anheften"><Pin /></button>
    </div>
  );
}

function TreeRow({ label, indent, mark, checked, muted, bold, icon }: {
  label: string; indent: string; mark?: "open" | "closed"; checked?: boolean; muted?: boolean; bold?: boolean; icon: ReactNode;
}) {
  return (
    <li className={`flex h-[22px] items-center ${indent}`}>
      <span className="w-[18px]">
        {mark === "open" && <Ico w={11} h={11} vw={11} vh={11}><path d="M10 1v9H1Z" fill="#8e8e8e" stroke="#333" /></Ico>}
        {mark === "closed" && <Ico w={9} h={12} vw={9} vh={12}><path d="M1 1l6.500 5L1 11Z" fill="#fff" stroke="#444" strokeWidth="1.200" /></Ico>}
      </span>
      <label className="flex items-center">
        <span className="relative mr-1 block h-[13px] w-[13px]">
          <input type="checkbox" defaultChecked={checked} className={`block h-[13px] w-[13px] appearance-none border ${checked && !muted ? "border-[#666]" : "border-[#aaa]"}`} />
          {checked && (
            <svg className="pointer-events-none absolute inset-0" viewBox="0 0 13 13" fill="none" aria-hidden="true"><path d="M3 6l2.500 3L10 3.500" stroke={muted ? "#888" : "#000"} strokeWidth="2" /></svg>
          )}
        </span>
        {icon}
        <span className={`${bold ? "ml-[7px] text-[17px] font-bold" : "ml-1.5"} leading-[22px]`}>{label}</span>
      </label>
    </li>
  );
}

const docParts = (
  <>
    <path d="M2 1h11l4 4v17H2Z" fill="#fff" stroke="#44546c" strokeWidth="1.300" />
    <path d="M13 1v5h5Z" fill="#444" />
  </>
);

function Option({ label, checked }: { label: string; checked?: boolean }) {
  return (
    <label className="flex h-[31px] items-center">
      <span className="relative mr-2.5 block h-[18px] w-[18px]">
        <input type="checkbox" defaultChecked={checked} className="block h-[18px] w-[18px] appearance-none border border-[#a8a8a8] bg-white checked:border-[#2d5c85] checked:bg-[#2d5c85]" />
        {checked && <svg className="pointer-events-none absolute inset-0" viewBox="0 0 18 18" fill="none" aria-hidden="true"><path d="M3 9l4.500 5L14 4" stroke="#fff" strokeWidth="2.200" /></svg>}
      </span>
      {label}
    </label>
  );
}

const panelTabs: [string, string][] = [
  ["Aus...", "w-[44px]"], ["Gru...", "w-[46px]"], ["Ansi...", "w-[51px]"], ["Eigens...", "w-[68px]"],
  ["Erschein...", "w-[81px]"], ["Simulation...", "w-[95px]"], ["Play...", "w-[50px]"], ["Layer", "w-[52px]"],
];

function SidePanel() {
  return (
    <aside className="flex w-[528px] shrink-0 flex-col overflow-hidden">
      <PanelTitle height="h-[33px]">Struktur</PanelTitle>
      <ul className="h-[706px] shrink-0 pt-[5px]">
        <TreeRow label="FFF*" bold muted checked mark="open" indent="pl-[2px]" icon={
          <Ico w={22} h={23}>{docParts}<Box x={10} y={9} w={13} h={14} top="#9fdcf2" left="#5fb6d8" right="#3789ab" line="#1f546b" /><Box x={0} y={15} w={12} h={8} /></Ico>
        } />
        <TreeRow label="Wa" checked indent="pl-[21px]" icon={<Ico w={22} h={22}>
          <g stroke="#14501c" strokeWidth="1.400" strokeLinejoin="round"><path d="M4 5 11 1l10 3-5 4Z" fill="#3fa94c" /><path d="M4 5l12 3v14H4Z" fill="#a6f0ac" /><path d="M21 4l-5 4v14l5-3Z" fill="#2c8a38" /></g>
        </Ico>} />
        <TreeRow label="Solid" mark="closed" indent="pl-[21px]" icon={<Ico w={22} h={22}><Box x={7} y={0} w={16} h={22} top="#e2f5fa" left="#cdebf3" right="#b2dbe8" line="#a3c4ce" /><Box x={0} y={12} w={16} h={11} top="#fcf2e8" left="#fae6d4" right="#eed8c4" line="#c9b6a4" /></Ico>} />
        <TreeRow label="Air" mark="closed" indent="pl-[21px]" icon={<Ico w={22} h={22}><g fill="#fbeadb" stroke="#c4ae9a" strokeWidth="1.200" strokeLinejoin="round"><path d="M1 4l8-4 7 3v7l7 3v6l-9 5L1 15Z" /><path d="M1 4l7 3v7l6 4v6M8 7l8-4M14 17l9-4M8 14l8-4" /></g></Ico>} />
      </ul>
      <div className="flex h-[38px] shrink-0 items-start bg-[#f7f7fd]">
        <button type="button" className="flex h-[33px] w-[34px] items-center justify-end overflow-hidden border-r border-[#2d5c85] bg-[#f0f0f0] pr-1 text-[#2d5c85]">Str...</button>
        <span className="w-[3px]" />
        {panelTabs.map(([t, w]) => <button key={t} type="button" className={`h-[33px] text-left ${w}`}>{t}</button>)}
      </div>
      <div className="mt-[5px] flex shrink-0 flex-col"><PanelTitle height="h-8">Optionen - Auswahl</PanelTitle></div>
      <div className="mr-0.5 mt-px flex h-9 shrink-0 items-center bg-[#f7f7fd]">
        <span className="-ml-1 mr-[9px]"><SketchPencil /></span>Skizze
      </div>
      <div className="pl-[5px] pt-2">
        <Option label="An Raster fangen" checked />
        <Option label="An Winkel fangen" checked />
        <Option label="Layoutkurven erstellen" />
      </div>
    </aside>
  );
}

const EDGE = "#4f6f50";
const LIT = "#9dc29e";
const SIDE = "#99b799";
const DARK = "#728c72";

function Manifold({ dx, dy }: { dx: number; dy: number }) {
  return (
    <g transform={`translate(${dx} ${dy})`} stroke={EDGE} strokeWidth="1.500" strokeLinejoin="round">
      <path d="M1386.600 1313 1372 1328.600 1456 1280.300 1470.800 1265Z" fill="#7f9c80" />
      <path d="M1157.500 1012.600 1242.200 963.400 1470.800 1265 1386.600 1313Z" fill={SIDE} />
      <path d="M1157.500 1012.600 1386.600 1313 1372 1328.600 1252.200 1330.500 1124.600 1162.400 1141.800 1027.600Z" fill={LIT} />
      <ellipse cx="1230.200" cy="1204.200" rx="30" ry="42.500" transform="rotate(-30 1230.200 1204.200)" fill="url(#tubeEnd)" />
      <path d="M962 1309.700 1209 1167.400 1251.400 1241 1004.500 1383.300Z" fill="url(#tube)" stroke="none" />
      <ellipse cx="983.300" cy="1346.500" rx="30" ry="42.500" transform="rotate(-30 983.300 1346.500)" fill={LIT} />
    </g>
  );
}

const tubeStops = (
  <>
    <stop offset="0" stopColor="#94b395" /><stop offset=".35" stopColor="#9bbd9c" /><stop offset=".65" stopColor="#8fae90" /><stop offset="1" stopColor="#7a967b" />
  </>
);

function Model() {
  return (
    <svg viewBox="537 211 3278 1792" preserveAspectRatio="xMinYMin slice" className="absolute inset-0 h-full w-full" role="img" aria-label="Wärmetauscher-Modell">
      <defs>
        <linearGradient id="tubeEnd" x1="0" y1="0" x2="0" y2="1">{tubeStops}</linearGradient>
        <linearGradient id="tube" gradientUnits="userSpaceOnUse" x1="962" y1="1309.700" x2="1004.500" y2="1383.300">{tubeStops}</linearGradient>
      </defs>
      <Manifold dx={0} dy={0} />
      <Manifold dx={237.500} dy={312} />
      {Array.from({ length: 12 }, (_, i) => (
        <g key={i} transform={`translate(${i * 36.5} ${i * 48.08})`}>
          <path d="M1205 1043 1260 987 1967 283 1970.500 288.500 1211.500 1046.500Q1205 1048 1205 1043Z" fill="#9cbf9c" stroke="#5c7e5d" strokeWidth="1" />
          <path d="M1211.500 1046.500 1255.300 1019.600 1272.600 1004.200 1978.500 299.300 1970.500 288.500Z" fill={DARK} stroke="#587459" strokeWidth="1" />
          <path d="M1211.500 1046 1970.500 288.500" stroke="#3d5c42" strokeWidth="1.200" />
        </g>
      ))}
      <g stroke={EDGE} strokeWidth="1.500" strokeLinejoin="round">
        <path d="M2412.800 837 2399 851.400 2482.700 803.600 2497.400 789Z" fill={DARK} />
        <path d="M1946.500 224.300 1972 210V200H2065L2084.500 212 2141.400 251.200 2057 299.700Z" fill="#9bbf9b" />
        <path d="M2057 299.700 2141.400 251.200 2448 653.600 2363 701.700Z" fill={SIDE} />
        <path d="M2363 701.700 2448 653.600 2497.400 789 2412.800 837Z" fill="#8ba98b" />
        <path d="M1932.600 239 1946.500 224.300 2057 299.700 2363 701.700 2412.800 837 2399 851.400Z" fill={LIT} />
      </g>
      <g strokeWidth="1.200" strokeDasharray="14 3 3 3">
        <path d="M985 1345 1267 1183M2298 716 2357 657M2336 764 2388 712M1470 1627 1575 1524M1425 1587 1537 1478" stroke="#7aa57b" />
        <path d="M2357 657 2428.400 586.400M2388 712 2465.400 634.500M1458 1639.500 1475 1622M946.700 1367 975 1351" stroke="#a8f0a8" strokeWidth="2.200" strokeDasharray="none" />
        <path d="M2357 657 2428.400 586.400M2388 712 2465.400 634.500M1458 1639.500 1475 1622M946.700 1367 975 1351" stroke="#2f7a35" />
        <path d="M1537 1478 2298 716M1575 1524 2336 764" stroke="#a9d6a9" strokeDasharray="10 8 3 8" opacity=".7" />
      </g>
    </svg>
  );
}

function AxisCube() {
  return (
    <svg width="100" height="90" viewBox="568 1862 100 90" className="absolute bottom-[51px] left-[31px]" role="img" aria-label="Achsenkreuz">
      <path d="M597 1880l1 12 4-1 6 12 4-3-6-11 4-2Z" fill="#0e9a0e" />
      <path d="M654 1885l-15 6 2 3-7 9 5 4 7-8 4 4Z" fill="#fa9696" />
      <path d="M586 1938l8-13 3 2 11-8 4 5-10 9 3 4Z" fill="#9090fa" />
      <circle cx="633" cy="1928" r="6" fill="#0e9a0e" />
      <g stroke="#9fb2cf" strokeWidth="1" strokeLinejoin="round">
        <path d="M613 1901 632 1892.500 649 1915 632 1927Z" fill="#dbe9fb" />
        <path d="M613 1901 600 1917 616.500 1940 632 1927Z" fill="#e2f0ff" />
        <path d="M616.500 1940 649 1915" />
      </g>
      <circle cx="632.500" cy="1908" r="6" fill="#f00" />
      <circle cx="613.700" cy="1922" r="6" fill="#00f" />
      <g className="font-['Liberation_Sans',Arial,sans-serif] text-[16px] font-bold">
        <text x="586" y="1879" fill="#167a16">Y</text>
        <text x="657" y="1883" fill="#f01414">X</text>
        <text x="571" y="1949" fill="#1414d8">Z</text>
      </g>
    </svg>
  );
}

function Workspace() {
  return (
    <main className="flex min-w-0 flex-1 flex-col pl-[5px]">
      <div className="relative ml-[3px] mt-[6px] min-h-0 flex-1 overflow-hidden border-y border-l border-[#a9a98f]">
        <Model />
        <AxisCube />
        <div className="relative flex items-start justify-between pl-4 pr-[22px] pt-3">
          <p className="text-[20px] leading-6 text-[#6a6a6a]">Auf ein Objekt klicken. Mit Doppelklicken Konturzüge auswählen. Dreifach klicken, um einen Volumenkörper auszuwählen.</p>
          <div className="pt-[18px] text-right font-['Noto_Sans','Open_Sans',sans-serif] text-[#4a4a4a]">
            <div className="text-[26px] font-bold leading-8">ANSYS</div>
            <div className="text-base leading-4">R19.1</div>
          </div>
        </div>
      </div>
      <div className="mt-[3px] flex h-[38px] shrink-0 items-start border-l border-t border-[#6f6f76] bg-[#f7f7fd]">
        <div className="ml-[3px] flex h-[34px] items-center border-x border-b-2 border-[#2d5c85] pl-[5px] pr-2">
          <Ico w={24}>{docParts}<Box x={5} y={11} w={17} h={12} /></Ico>
          <button type="button" className="ml-1 text-[17px] text-[#2d5c85]">FFF*</button>
          <button type="button" aria-label="Dokument schließen" className="ml-1.5"><Ico w={11} h={11} vw={11} vh={11}><path d="M1.500 1l8 9M9.500 1l-8 9" stroke="#666" strokeWidth="2.600" /></Ico></button>
        </div>
        <span className="flex-1" />
        <div className="flex h-8 items-center gap-4">
          <button type="button" aria-label="Zurück"><Ico w={8} h={14} vw={8} vh={14}><path d="M7 1v12L1 7Z" stroke="#333" /></Ico></button>
          <button type="button" aria-label="Weiter"><Ico w={8} h={14} vw={8} vh={14}><path d="M1 1v12l6-6Z" stroke="#333" /></Ico></button>
          <button type="button" aria-label="Alle schließen" className="-ml-0.5"><Ico w={8} h={12} vw={8} vh={12}><path d="M1 1l10 10M11 1 1 11" stroke="#333" strokeWidth="1.600" /></Ico></button>
        </div>
      </div>
    </main>
  );
}

function StatusBar() {
  return (
    <footer className="flex h-[22px] shrink-0 items-start overflow-hidden bg-[#2d5c85] text-white">
      <p className="mt-[13px] flex-1 whitespace-nowrap leading-6">Auf ein Objekt klicken. Mit Doppelklicken Konturzüge auswählen. Dreifach klicken, um einen Volumenkörper auszuwählen.</p>
      <div className="mt-[7px] flex h-6 shrink-0">
        <span className="w-[226px] border-l border-[#8aa5bd]" />
        <span className="w-[97px] border-l border-[#8aa5bd] pl-[54px] pt-2"><Ico w={14} h={10} vw={14} vh={10}><path d="M7 0l7 10H0Z" fill="#a5b4c2" /></Ico></span>
        <span className="w-[307px] border-l border-[#8aa5bd]" />
        <span className="flex w-[627px] justify-end border-l border-[#8aa5bd] pr-[19px] pt-1">
          <Ico w={144} h={24} vw={144} vh={24}>
            <path d="M9 1l7 9H2Z" fill="#8496a6" />
            <path d="M29 4v20l16-10Z" fill="#fff" stroke="#222" />
            <path d="M50 3l-10 6 8 6M42 9c8-2 12 2 8 12" stroke="#62a9ee" strokeWidth="3" />
            <path d="M68 4v20l16-10Z" fill="#fff" stroke="#222" />
            <path d="M118 10V6h22v16" stroke="#7ab8f5" strokeWidth="3" strokeDasharray="5 4" />
          </Ico>
        </span>
        <span className="w-[222px] border-l border-[#8aa5bd] pt-1">
          <Ico w={221} h={24} vw={221} vh={24}>
            <path d="M12 5l10 2-3 10M11 16l6-5 6 5" stroke="#7ab8f5" strokeWidth="3" />
            <path d="M72 3v20M64 12h16M67 8l5-5 5 5" stroke="#7ab8f5" strokeWidth="2.600" />
            <circle cx="106" cy="11" r="9" fill="#fff" stroke="#7ab8f5" strokeWidth="2" />
            <path d="M154 14l18-9v12Z" fill="#7ab8f5" />
            <path d="M196 6h12l-6 10Z" fill="#8496a6" />
          </Ico>
        </span>
      </div>
    </footer>
  );
}

export default function App() {
  return (
    <div className="relative flex h-screen flex-col overflow-hidden bg-white font-['Liberation_Sans',Arial,sans-serif] text-base text-black">
      <Header />
      <Ribbon />
      <div className="h-[3px] shrink-0 border-b border-[#2f577c] bg-[#e9f0f8]" />
      <div className="flex min-h-0 flex-1">
        <SidePanel />
        <Workspace />
      </div>
      <StatusBar />
      <section aria-label="Playback" className="absolute bottom-0 left-[42px] h-[447px] w-[450px] border-x-2 border-t-2 border-[#2d5c85] bg-[#f0f0f0]">
        <h2 className="h-[31px] bg-[#f7f7fd] pl-1 pt-0.5 text-[17px] leading-[31px] text-[#9c9ca2]">Playback</h2>
      </section>
    </div>
  );
}
